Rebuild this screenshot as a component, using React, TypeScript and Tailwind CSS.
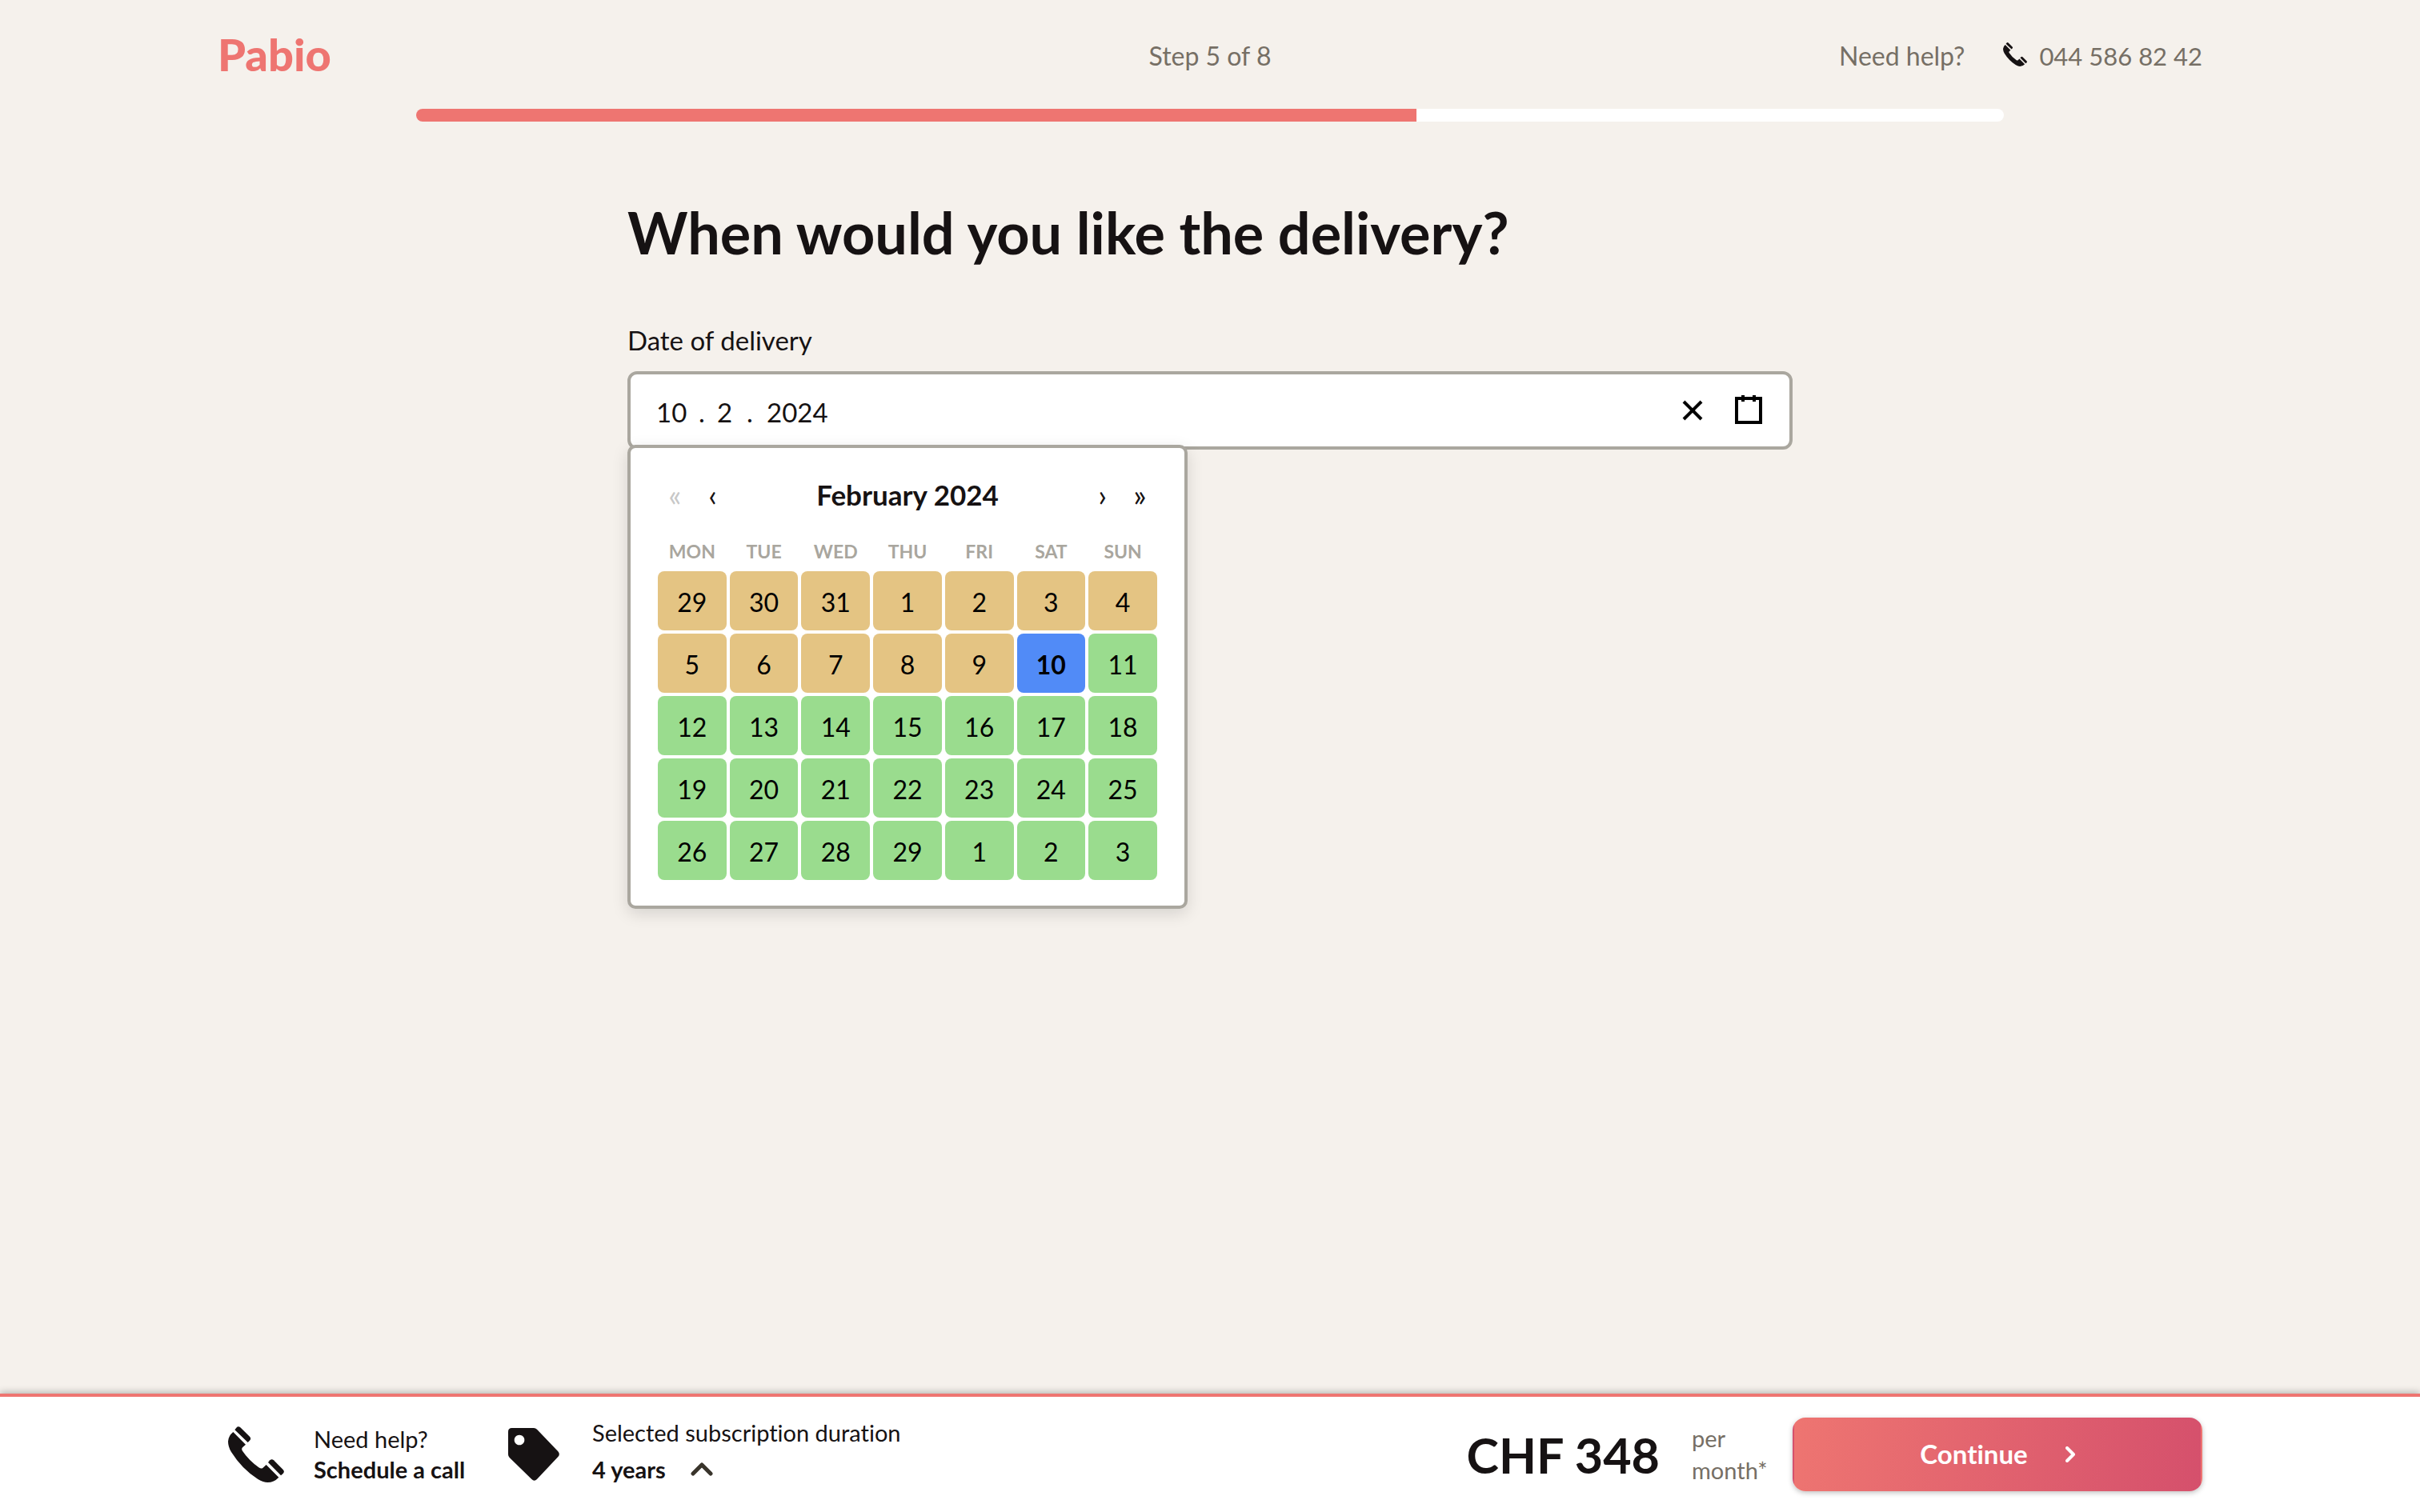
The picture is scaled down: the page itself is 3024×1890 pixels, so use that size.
import { useState } from "react";

const WEEKDAYS = ["Mon", "Tue", "Wed", "Thu", "Fri", "Sat", "Sun"];

const WEEKS = [
  [29, 30, 31, 1, 2, 3, 4],
  [5, 6, 7, 8, 9, 10, 11],
  [12, 13, 14, 15, 16, 17, 18],
  [19, 20, 21, 22, 23, 24, 25],
  [26, 27, 28, 29, 1, 2, 3],
];

const FIRST_AVAILABLE_INDEX = 12;

function PhoneIcon({ className }: { className: string }) {
  return (
    <svg viewBox="0 0 210 210" className={className} fill="currentColor" aria-hidden="true">
      <path d="M25 13 L31 5 Q38 -3 46 4 L81 38 Q88 46 81 53 L74 60 Z" />
      <path d="M19 21 L66 68 L54 79 Q49 84 53 91 Q78 128 115 154 Q124 160 130 156 L143 144 L190 191 Q172 210 148 210 Q132 210 112 198 Q52 160 12 96 Q0 76 0 56 Q1 36 19 21 Z" />
      <path d="M150 135 L157 127 Q164 121 171 127 L206 162 Q213 170 206 177 L198 184 Z" />
    </svg>
  );
}

function TagIcon() {
  return (
    <svg viewBox="0 0 192 198" className="h-[66px] w-[64px] shrink-0" fill="currentColor" aria-hidden="true">
      <path
        fillRule="evenodd"
        d="M14 0 H96 Q103 0 108 5 L187 88 Q196 98 187 108 L108 192 Q98 202 88 192 L5 111 Q0 106 0 99 V14 Q0 0 14 0 Z M42 26 a19 19 0 1 0 0.1 0 Z"
      />
    </svg>
  );
}

function CloseIcon() {
  return (
    <svg viewBox="0 0 19 19" className="size-[38px]" stroke="black" strokeWidth="2" aria-hidden="true">
      <line x1="4" y1="4" x2="15" y2="15" />
      <line x1="15" y1="4" x2="4" y2="15" />
    </svg>
  );
}

function CalendarIcon() {
  return (
    <svg viewBox="0 0 19 19" className="size-[38px]" stroke="black" strokeWidth="2" fill="none" aria-hidden="true">
      <rect x="2" y="2" width="15" height="15" />
      <line x1="6" y1="0" x2="6" y2="4" />
      <line x1="13" y1="0" x2="13" y2="4" />
    </svg>
  );
}

function Header() {
  return (
    <header className="grid h-[136px] grid-cols-3 items-center pt-1 text-[32px] leading-10 text-[#766f65]">
      <a href="#home" className="justify-self-start pb-1 text-[56px] font-black leading-none text-[#ee7571]">
        Pabio
      </a>
      <p className="text-center">Step 5 of 8</p>
      <div className="flex items-center justify-end">
        <span>Need help?</span>
        <a href="tel:0445868242" className="ml-[48px] flex items-center gap-[15px] text-[31px]">
          <PhoneIcon className="mb-1 size-[30px] text-[#161213]" />
          044 586 82 42
        </a>
      </div>
    </header>
  );
}

function Calendar({ selected, onSelect }: { selected: number; onSelect: (index: number) => void }) {
  return (
    <div className="absolute -left-1 top-[88px] w-[700px] rounded-[10px] border-4 border-[#aaa79f] bg-white px-[32px] pb-[30px] pt-[32px] shadow-[0_6px_20px_rgba(0,0,0,0.13)]">
      <div className="mb-[24px] flex h-[52px] items-center text-[38px] leading-none">
        <button type="button" disabled aria-label="Previous year" className="h-full w-[47px] text-[#c8c8c8]">«</button>
        <button type="button" aria-label="Previous month" className="h-full w-[47px]">‹</button>
        <div className="flex-1 text-center text-[35px] font-bold leading-10">February 2024</div>
        <button type="button" aria-label="Next month" className="h-full w-[47px]">›</button>
        <button type="button" aria-label="Next year" className="h-full w-[47px]">»</button>
      </div>
      <table className="w-full table-fixed border-collapse">
        <thead>
          <tr>
            {WEEKDAYS.map((day) => (
              <th key={day} scope="col" className="h-[44px] p-0 pb-[2px] text-center text-[23px] font-bold uppercase leading-none text-[#a9a69e]">
                {day}
              </th>
            ))}
          </tr>
        </thead>
        <tbody>
          {WEEKS.map((week, w) => (
            <tr key={w}>
              {week.map((day, d) => {
                const index = w * 7 + d;
                const tone =
                  index === selected
                    ? "bg-[#518bf7] font-bold"
                    : index < FIRST_AVAILABLE_INDEX
                      ? "bg-[#e4c483]"
                      : "bg-[#9adc8e]";
                return (
                  <td key={d} className="p-[2px]">
                    <button
                      type="button"
                      onClick={() => onSelect(index)}
                      className={`block h-[74px] w-full rounded-[8px] pt-1 text-[32px] leading-none text-black ${tone}`}
                    >
                      {day}
                    </button>
                  </td>
                );
              })}
            </tr>
          ))}
        </tbody>
      </table>
    </div>
  );
}

function DateField() {
  const [selected, setSelected] = useState(12);
  return (
    <div className="relative flex h-[98px] items-center rounded-[12px] border-4 border-[#aaa79f] bg-white px-[32px]">
      <div className="flex flex-1 pt-1 text-[33px] leading-10">
        <input id="delivery-day" aria-label="Day of delivery" defaultValue="10" className="w-[38px] outline-none" />
        <span className="w-[38px] text-center">.</span>
        <input aria-label="Month of delivery" defaultValue="2" className="w-[20px] outline-none" />
        <span className="w-[42px] text-center">.</span>
        <input aria-label="Year of delivery" defaultValue="2024" className="w-[90px] outline-none" />
      </div>
      <div className="flex gap-[32px]">
        <button type="button" aria-label="Clear date"><CloseIcon /></button>
        <button type="button" aria-label="Toggle calendar"><CalendarIcon /></button>
      </div>
      <Calendar selected={selected} onSelect={setSelected} />
    </div>
  );
}

function Footer() {
  return (
    <footer className="border-t-4 border-[#ee7571] bg-white py-[26px] shadow-[0_-2px_8px_rgba(0,0,0,0.25)]">
      <div className="mx-auto flex w-full max-w-[2480px] items-center text-[29px]">
        <a href="#call" className="ml-[13px] flex items-center gap-[37px] leading-[38px]">
          <PhoneIcon className="size-[70px] shrink-0" />
          <span className="w-[194px] whitespace-nowrap">
            Need help?
            <br />
            <strong>Schedule a call</strong>
          </span>
        </a>
        <div className="ml-[49px] flex items-center gap-[41px]">
          <TagIcon />
          <div>
            <div className="leading-[38px]">Selected subscription duration</div>
            <button type="button" className="flex h-[54px] items-center gap-[31px] font-bold">
              4 years
              <svg viewBox="0 0 28 18" className="h-[18px] w-[28px]" fill="none" stroke="#39342b" strokeWidth="5" strokeLinecap="round" strokeLinejoin="round" aria-hidden="true">
                <path d="M3 14 L14 3 L25 14" />
              </svg>
            </button>
          </div>
        </div>
        <div className="ml-auto text-[61px] font-bold leading-none">CHF 348</div>
        <div className="ml-[40px] w-[126px] leading-[40px] text-[#766f65]">
          per
          <br />
          month*
        </div>
        <button
          type="button"
          className="flex h-[92px] w-[512px] items-center justify-center gap-[47px] rounded-[16px] border-2 border-transparent bg-linear-[100deg,#ee7571,#d5506c] text-[33px] font-bold text-white shadow-[0_2px_6px_rgba(0,0,0,0.25)]"
        >
          Continue
          <svg viewBox="0 0 12 20" className="h-[20px] w-[12px]" fill="none" stroke="currentColor" strokeWidth="4" strokeLinecap="round" strokeLinejoin="round" aria-hidden="true">
            <path d="M2 2 L10 10 L2 18" />
          </svg>
        </button>
      </div>
    </footer>
  );
}

export default function App() {
  return (
    <div className="flex min-h-screen flex-col bg-[#f5f1ec] font-['Lato',sans-serif] text-[#161213] [font-variant-ligatures:none]">
      <div className="mx-auto w-full max-w-[2480px]">
        <Header />
        <div
          role="progressbar"
          aria-label="Progress"
          aria-valuenow={63}
          aria-valuemin={0}
          aria-valuemax={100}
          className="mx-auto h-4 w-4/5 overflow-hidden rounded-full bg-white"
        >
          <div className="h-full w-[63%] bg-[#ee7571]" />
        </div>
      </div>
      <main className="mx-auto w-full max-w-[1456px] flex-1">
        <h1 className="mt-[94px] text-[72px] font-bold leading-[88px]">When would you like the delivery?</h1>
        <label htmlFor="delivery-day" className="mb-[19px] mt-[71px] block text-[33px] leading-10">
          Date of delivery
        </label>
        <DateField />
      </main>
      <Footer />
    </div>
  );
}
